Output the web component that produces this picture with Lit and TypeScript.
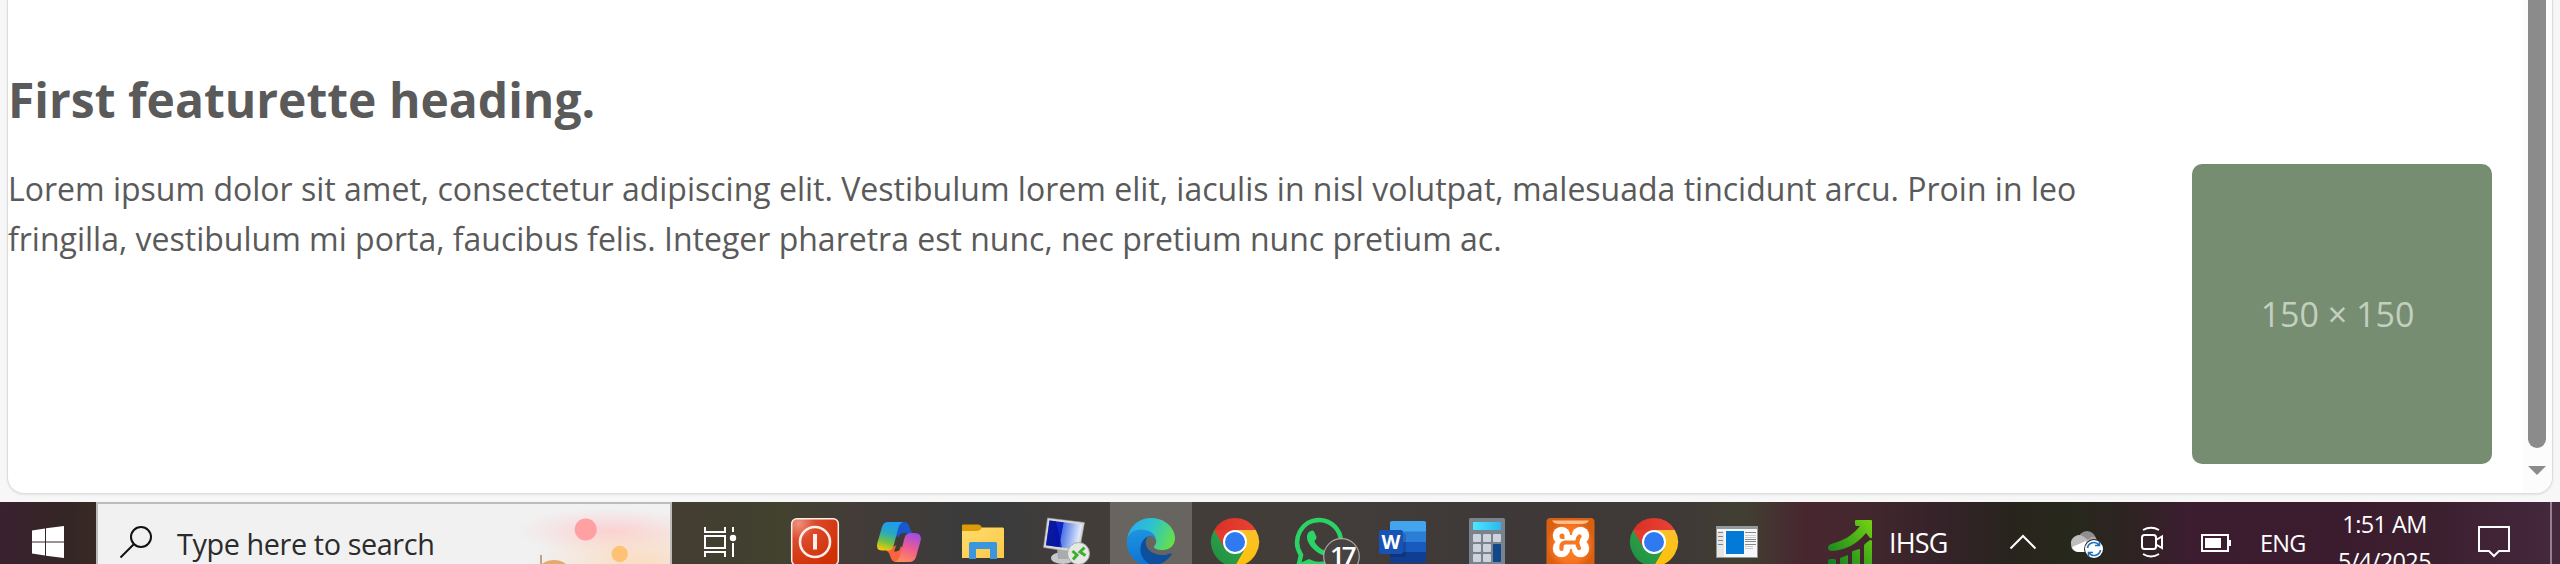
import { LitElement, html, css, svg, TemplateResult } from "lit";
import { customElement, property } from "lit/decorators.js";

const chrome = (p: string) => svg`
  <g transform="translate(42 40)">
    <path d="M0 0 L-20.8 -12 A24 24 0 0 1 20.8 -12 Z M-20.8 -12 A24 24 0 0 1 20.8 -12 L0 -12 Z" fill="url(#${p}r)"/>
    <path d="M-20.8 -12 A24 24 0 0 0 0 24 L10.4 6 L0 0 Z" fill="url(#${p}g)"/>
    <path d="M20.8 -12 A24 24 0 0 1 0 24 L10.4 6 L0 -12 Z" fill="url(#${p}y)"/>
    <path d="M-20.8 -12 L-10.4 6 L0 -12Z" fill="#e33b2e"/>
    <circle r="12" fill="#fff"/><circle r="10" fill="#2f7af0"/>
  </g>
  <defs>
    <linearGradient id="${p}r" x1="0" x2="1"><stop offset="0" stop-color="#d93025"/><stop offset="1" stop-color="#ea4335"/></linearGradient>
    <linearGradient id="${p}g" x1="0" y1="1" x2="1" y2="0"><stop offset="0" stop-color="#1e8e3e"/><stop offset="1" stop-color="#34a853"/></linearGradient>
    <linearGradient id="${p}y" x1="0" y1="1" x2="0" y2="0"><stop offset="0" stop-color="#fcc208"/><stop offset="1" stop-color="#fbc02d"/></linearGradient>
  </defs>`;

const glyphs: Record<string, TemplateResult> = {
  power: svg`
    <defs><radialGradient id="pw" cx=".15" cy=".1" r="1"><stop offset="0" stop-color="#f0917c"/><stop offset=".35" stop-color="#dc4a2c"/><stop offset="1" stop-color="#cf3005"/></radialGradient></defs>
    <rect x="18.7" y="16.7" width="46.6" height="46.6" rx="5" fill="url(#pw)" stroke="#fbeeea" stroke-width="1.5"/>
    <circle cx="42" cy="40" r="15" fill="none" stroke="#fdeee9" stroke-width="2.6"/>
    <rect x="40" y="32" width="4" height="15.5" fill="#fdeee9"/>`,
  copilot: svg`
    <defs>
      <linearGradient id="ca" x1=".6" y1="0" x2=".35" y2="1"><stop offset="0" stop-color="#1b9cf0"/><stop offset=".4" stop-color="#2aa8c0"/><stop offset=".7" stop-color="#6cc04a"/><stop offset="1" stop-color="#f2c808"/></linearGradient>
      <linearGradient id="cb" x1=".6" y1="0" x2=".3" y2="1"><stop offset="0" stop-color="#a34de0"/><stop offset=".5" stop-color="#ee5c92"/><stop offset="1" stop-color="#ff8a5c"/></linearGradient>
    </defs>
    <path d="M33 20 H47 Q51 20 52.5 25 L55 31 H47 Q43 31 41.5 35 L34 33Z" fill="#1857cd"/>
    <path d="M29 48 L42 42 L49 50 L44 60 H39 Q35 60 33.5 55 L32 51Z" fill="#f8643c"/>
    <path d="M31 20 H46 Q42 22 41 27 L36.500 44 Q35 48.500 31 48.500 H25 Q18.500 48.500 20.300 41 L25 25 Q26.500 20 31 20Z" fill="url(#ca)"/>
    <path d="M53 31 H57 Q65.500 31 63.500 39 L59 55 Q57.500 60 52 60 H38 Q42 58 43.200 53 L47.500 36 Q49 31 53 31Z" fill="url(#cb)"/>
    <path d="M42.500 34 Q43.500 31.500 47.500 31.500 L42.800 47.500 Q41.500 49.500 37 49.500Z" fill="#403a37"/>`,
  folder: svg`
    <defs><linearGradient id="fo" x1="0" y1="0" x2="1" y2="1"><stop offset="0" stop-color="#ffdc6b"/><stop offset="1" stop-color="#fcc847"/></linearGradient></defs>
    <path d="M21 23.500 Q21 22.500 22 22.500 H37 Q39 22.500 40 24 L41 25.500 H62 V34 H21Z" fill="#dd9b08"/>
    <path d="M21 29 H35 Q38 29 39.500 27.500 L41 25.700 H62 Q63 25.700 63 27 V56 H21Z" fill="url(#fo)"/>
    <path d="M28 57 V41.500 Q28 40 29.500 40 H54.500 Q56 40 56 41.500 V57 H49 V47 H35 V57Z" fill="#3b96dd"/>`,
  remote: svg`
    <defs><linearGradient id="rm" x1="0" y1="0" x2="1" y2=".15"><stop offset="0" stop-color="#2038b8"/><stop offset=".48" stop-color="#0b22c8"/><stop offset=".5" stop-color="#5074e6"/><stop offset="1" stop-color="#e4efff"/></linearGradient></defs>
    <ellipse cx="38" cy="56" rx="12" ry="6" fill="#c6c8c9"/><path d="M32 47 H46 L44 57 H33Z" fill="#a9acad"/>
    <path d="M22.500 16 L59.500 20.500 L54 51 L18.500 45.500Z" fill="#d8d8d4" stroke="#9b9b98" stroke-width=".6"/>
    <path d="M24.500 18.500 L57 22.500 L52 47.500 L21 43.300Z" fill="url(#rm)"/>
    <path d="M24.500 18.500 L31 19.300 L37 45.500 L21 43.300Z" fill="#000c90" opacity=".65"/>
    <circle cx="53.500" cy="51.500" r="11" fill="#e5e8e5" stroke="#a5a9a5" stroke-width="1"/>
    <path d="M47.500 49 L52 53 L48 57.500 M59.500 45.500 L55 50 L60.500 53.500" fill="none" stroke="#3fae2c" stroke-width="3"/>`,
  edge: svg`
    <defs>
      <linearGradient id="ea" x1="0" y1=".3" x2="1" y2=".6"><stop offset="0" stop-color="#2aa9ee"/><stop offset=".45" stop-color="#2cc3cf"/><stop offset="1" stop-color="#66e04a"/></linearGradient>
      <linearGradient id="eb" x1=".3" y1="0" x2=".4" y2="1"><stop offset="0" stop-color="#1e93e0"/><stop offset="1" stop-color="#0b74d6"/></linearGradient>
    </defs>
    <path d="M18.200 37 C20 24 30 16 42 16 C56 16 66 26 66 36 C66 44 60 48 54 48 C48 48 45 46.500 45 45 C45 43.500 48 42 47 38 C44 31 30 26 18.200 37Z" fill="url(#ea)"/>
    <path d="M18 41 C18 31 25 27.500 32 27.500 C40 27.500 47 32 47.500 38.500 C47 35.500 44 34 41 34 C34 35 30 46 34 54 C36 59 41 63 45 63.700 C29 65 18 54 18 41Z" fill="url(#eb)"/>
    <path d="M40 34.300 C33 36 29 46 33 54 C36 61 43 64 48 63 C55 61 60 57 62.500 52.500 C63 51.500 62 51 61 51.500 C50 56 37 50 36.700 41 C36.600 38 38 35.500 40 34.300Z" fill="#0d4f9c"/>`,
  chrome: chrome("c1"),
  chrome2: chrome("c2"),
  whatsapp: svg`
    <path d="M21.500 64 L24 53 C14 37 25 18 42 18 A22 22 0 0 1 42 62 C38 62 35 61 32 59.500 L21.500 64Z" fill="none" stroke="#2bd366" stroke-width="4.500"/>
    <path d="M34 29 C36 28 37 29 38 31.500 L39.500 35 C40 36.500 37.500 38.500 37.500 39.500 C40 44 44 47.500 48 48.500 C49.500 48 50.500 45 52 45.500 L56 47.500 C59 49 56 53.500 52 54 C43 55 29 43 30 34 C30.500 31 32 29.500 34 29Z" fill="#2bd366"/>
    <circle cx="64.500" cy="54.500" r="17.800" fill="#474341" stroke="#aaa8a6" stroke-width="1.200"/>`,
  word: svg`
    <path d="M31 19 H63 Q65 19 65 20.500 V30 H29 V20.500 Q29 19 31 19Z" fill="#43a5ee"/>
    <rect x="29" y="29.500" width="36" height="11" fill="#2b7dd6"/><rect x="29" y="40" width="36" height="10.500" fill="#185abd"/>
    <path d="M29 50 H65 V59.500 Q65 61 63 61 H31 Q29 61 29 59.500Z" fill="#103f91"/>
    <path d="M29 31 h13 q3 0 3 3 v18 q0 3 -3 3 h-13Z" fill="#000" opacity=".15"/>
    <rect x="18" y="28" width="24" height="24" rx="2" fill="#1852b4"/>`,
  calc: svg`
    <defs><linearGradient id="cl"><stop offset="0" stop-color="#4de6ff"/><stop offset="1" stop-color="#2bb8ee"/></linearGradient></defs>
    <rect x="24" y="16" width="36" height="50" rx="1.500" fill="#79838d"/>
    <rect x="28" y="20" width="28" height="8" rx="1" fill="url(#cl)"/>
    ${[0, 1, 2].map((r) => [0, 1, 2].map((c) => r && c === 2 ? null : svg`<rect x=${28 + c * 10} y=${32 + r * 10} width="8" height="8" rx="1" fill="#ccd3dc"/>`))}
    <rect x="48" y="42" width="8" height="18" rx="1" fill="#12478c"/>`,
  xampp: svg`
    <defs><radialGradient id="xa"><stop offset="0" stop-color="#ff8427"/><stop offset=".7" stop-color="#f77420"/><stop offset="1" stop-color="#d95f11"/></radialGradient></defs>
    <rect x="17.500" y="16" width="48" height="52" rx="4" fill="url(#xa)"/>
    <path d="M23 18.500 H60 Q58 22 53 22 H30 Q25 22 23 18.500Z" fill="#ffbd8b"/>
    <g fill="#fff"><circle cx="32.500" cy="33.500" r="8.700"/><circle cx="51.500" cy="33.500" r="8.700"/><circle cx="32.500" cy="46.500" r="8.700"/><circle cx="51.500" cy="46.500" r="8.700"/><rect x="28" y="33" width="28" height="14"/></g>
    <path d="M30.500 34 Q30.500 31.500 33 31.500 Q35.500 31.500 35.500 34 V37 H33 Q30.500 37 30.500 34Z" fill="#f77822"/>
    <path d="M32.500 47 V44.500 Q32.500 41 36 40.500 H47.500 M48.500 40 Q48.500 36 50.500 34.500 M48.500 41 Q48.500 44 50 46" fill="none" stroke="#f77822" stroke-width="4.200" stroke-linecap="round"/>`,
  windowapp: svg`
    <rect x="21.500" y="24.500" width="41" height="31" fill="#f7f7f7" stroke="#8f9699"/>
    <rect x="21" y="24" width="42" height="3" fill="#939a9e"/><rect x="22" y="29" width="7" height="26" fill="#e6e6e6"/>
    <rect x="31" y="29" width="18" height="23" fill="#0379d8"/>
    <path d="M23 30.500h5M23 34.500h5M23 38.500h5M23 42.500h5M50 30.500h11M50 37.500h11M50 39.500h11M50 42.500h11" stroke="#888" stroke-width="1"/>
    <path d="M50 33.500h11M50 35.500h11M50 44.500h8M50 46.500h8" stroke="#ccc" stroke-width="1"/>`,
};

@customElement("task-icon")
class TaskIcon extends LitElement {
  @property() name = "";
  static styles = css`
    :host { display: block; position: relative; height: 62px; }
    svg { display: block; width: 84px; height: 62px; overflow: visible; }
    .badge, .letter { position: absolute; color: #fff; line-height: 1; }
    .badge { left: 53px; top: 40px; font: 600 26px/26px "Open Sans", sans-serif; letter-spacing: -3px; }
    .letter { left: 20.500px; top: 30px; font: bold 19.500px/19.500px "Open Sans", sans-serif; }
  `;
  render() {
    return html`<svg viewBox="0 0 84 62">${glyphs[this.name]}</svg>
      ${this.name === "whatsapp" ? html`<span class="badge">17</span>` : null}
      ${this.name === "word" ? html`<span class="letter">W</span>` : null}`;
  }
}

@customElement("task-bar")
class TaskBar extends LitElement {
  static styles = css`
    :host {
      display: flex; height: 62px; overflow: hidden; color: #fff;
      font-family: "Open Sans", "Noto Sans", sans-serif;
      background: linear-gradient(90deg, #3a2230 0, #342624 70px, #382925 96px, #443d32 672px, #413f30 735px, #43422f 780px, #433c38 850px, #3a3b3c 985px, #433d3a 1090px, #433d3a 1300px, #3e3938 1500px, #3f3937 1680px, #413f31 1745px, #482630 1805px, #45272f 1850px, #332328 1950px, #28241d 2010px, #27281c 2070px, #2e2322 2130px, #3c1d30 2190px, #3b1c2e 2350px, #3d2030 2440px, #46283e 2560px);
    }
    svg { display: block; flex: none; }
    .start { width: 96px; }
    .search { box-sizing: border-box; width: 576px; height: 64px; border: 2px solid #bcbcbc; background: #f1f1f1; display: flex; flex: none; color: #2b2b2b; }
    .query { width: 257px; flex: none; margin-top: 17px; font-size: 28.800px; line-height: 46px; white-space: nowrap; letter-spacing: -.4px; }
    .view { width: 101px; }
    .apps { display: flex; flex: none; width: 1007px; }
    task-icon { width: 84px; flex: none; }
    .short { width: 83px; }
    .active { background: linear-gradient(90deg, transparent 1px, #68645f 1px, #68645f 83px, transparent 83px); }
    .stock { width: 109px; }
    .label { white-space: nowrap; flex: none; }
    .ihsg { width: 111px; font-size: 27px; line-height: 82px; letter-spacing: -.8px; }
    .lang { width: 59px; font-size: 23.500px; line-height: 83px; letter-spacing: -.8px; }
    .clock { width: 131px; text-align: center; font-size: 23.500px; line-height: 37px; padding-top: 4px; letter-spacing: -.6px; }
  `;
  render() {
    return html`
      <svg class="start" width="96" height="62"><path d="M32 28.500 L45 26.500 V39.500 H32Z M46 26.300 L64 24 V39.500 H46Z M32 40.500 H45 V53.500 L32 51.500Z M46 40.500 H64 V56 L46 53.700Z" fill="#fff"/></svg>
      <div class="search">
        <svg width="79" height="60"><g transform="translate(-98 -504)" fill="none" stroke="#111" stroke-width="2"><circle cx="141" cy="537" r="10"/><path d="M133.500 544.500 L120.500 557.500"/></g></svg>
        <span class="query">Type here to search</span>
        <svg width="236" height="60" viewBox="434 504 236 60">
          <defs>
            <radialGradient id="g1"><stop offset="0" stop-color="#ffc4c8" stop-opacity=".7"/><stop offset="1" stop-color="#ffc4c8" stop-opacity="0"/></radialGradient>
            <radialGradient id="g2"><stop offset="0" stop-color="#ffd3ae" stop-opacity=".7"/><stop offset="1" stop-color="#ffd3ae" stop-opacity="0"/></radialGradient>
          </defs>
          <ellipse cx="610" cy="531" rx="94" ry="23" fill="url(#g1)"/>
          <ellipse cx="640" cy="562" rx="110" ry="38" fill="url(#g2)"/>
          <circle cx="585.700" cy="529.500" r="11" fill="#ffa0a2"/><circle cx="619.700" cy="554" r="8.200" fill="#ffc274"/>
          <path d="M541 555 V564" stroke="#b98568" stroke-width="1.500"/><ellipse cx="554" cy="570" rx="15" ry="10" fill="#e2aa6c"/>
        </svg>
      </div>
      <svg class="view" width="101" height="62" viewBox="672 502 101 62"><g fill="none" stroke="#fff" stroke-width="2"><path d="M705 527 V532 H725 V527 M705 557 V552 H725 V557"/><rect x="705" y="536" width="20" height="12"/><path d="M733 527 V532 M733 543 V557"/></g><circle cx="733" cy="538" r="3.200" fill="#fff"/></svg>
      <div class="apps">
        ${["power", "copilot", "folder", "remote"].map((n) => html`<task-icon name=${n}></task-icon>`)}
        <task-icon class="active" name="edge"></task-icon>
        ${["chrome", "whatsapp", "word", "calc"].map((n) => html`<task-icon name=${n}></task-icon>`)}
        ${["xampp", "chrome2", "windowapp"].map((n) => html`<task-icon class="short" name=${n}></task-icon>`)}
      </div>
      <svg class="stock" width="109" height="62" viewBox="1780 502 109 62">
        <defs><linearGradient id="sg" gradientUnits="userSpaceOnUse" x1="1828" y1="560" x2="1872" y2="525"><stop offset="0" stop-color="#108020"/><stop offset="1" stop-color="#70cf12"/></linearGradient></defs>
        <g fill="url(#sg)"><path d="M1855 521 Q1855 520 1856 520 H1871 Q1872 520 1872 521 V537 Q1872 539 1870 538 L1866 533 C1856 545 1845 550 1832 551 Q1828 551 1828 548 Q1828 545 1831 544 C1843 541 1852 536 1860 526 L1856 526 Q1855 525 1855 524Z"/>
        <rect x="1828" y="559" width="8" height="12" rx="2"/><path d="M1840 558 L1848 555 V568 H1840Z M1852 552 Q1852 551 1853 551 L1859 549 Q1860 549 1860 550 V568 H1852Z M1864 546 Q1864 544 1866 543 L1870 540 Q1872 540 1872 541 V568 H1864Z"/></g>
      </svg>
      <span class="label ihsg">IHSG</span>
      <svg width="260" height="62" viewBox="2000 502 260 62" fill="none" stroke="#fff" stroke-width="2">
        <path d="M2010.500 548.500 L2023 536 L2035.500 548.500"/>
        <g stroke="none"><circle cx="2087" cy="540" r="9" fill="#8f8f8f"/><path d="M2087 540 Q2097 531 2098 546 H2087Z" fill="#aaa"/><path d="M2071 544 A8 8 0 0 1 2084 537 Q2087 539 2095 546 L2088 552 H2079 Q2071 552 2071 544Z" fill="#bdbdbd"/><path d="M2072 547 L2086 541 L2090 552 H2079 Q2074 552 2072 547Z" fill="#fff"/>
        <circle cx="2094" cy="549" r="10" fill="#2a261f"/><circle cx="2094" cy="549" r="9" fill="#fff"/></g>
        <path d="M2087.500 548 A6.500 6.500 0 0 1 2099 545 M2100.500 550 A6.500 6.500 0 0 1 2089 553 M2099.500 541.500 V545.500 H2095 M2088.500 556.500 V552.500 H2093" stroke="#1b70c4" stroke-width="1.600"/>
        <rect x="2142" y="535" width="14" height="14" rx="2.500"/><path d="M2156 540 L2162 536.500 V548 L2156 544.500 M2143 530 Q2151 525.500 2159 530 M2143 554 Q2151 559 2159 554"/>
        <path d="M2202 535 H2228 V551 H2202Z"/><path d="M2205 538 H2221 V548 H2205Z M2229 540 H2231 V546 H2229Z" fill="#fff" stroke="none"/>
      </svg>
      <span class="label lang">ENG</span>
      <div class="label clock">1:51 AM<br>5/4/2025</div>
      <svg width="110" height="62" viewBox="2450 502 110 62"><path d="M2479 527 H2509 V551 H2499 L2494 556 L2489 551 H2479Z" fill="none" stroke="#fff" stroke-width="2"/><rect x="2550" y="502" width="2" height="62" fill="#94808f"/></svg>
    `;
  }
}

@customElement("app-root")
class AppRoot extends LitElement {
  static styles = css`
    :host { display: flex; flex-direction: column; height: 564px; overflow: hidden; background: #f7f7f7; font-family: "Open Sans", "Noto Sans", sans-serif; color: #5a5a5a; }
    .frame { height: 502px; flex: none; overflow: hidden; padding: 0 8px; }
    .panel { display: flex; height: 493px; background: #fff; border-radius: 0 0 16px 16px; overflow: hidden; box-shadow: 0 0 0 1px #dedede, 0 1px 3px #ccc; }
    .content { flex: 1; display: flex; }
    .copy { width: 2184px; flex: none; }
    h2 { margin: 67px 0 0; font-size: 48px; line-height: 66px; font-weight: 700; white-space: nowrap; }
    p { margin: 31px 0 0; font-size: 32px; line-height: 50px; white-space: nowrap; }
    .thumb { width: 300px; height: 300px; margin-top: 164px; border-radius: 10px; background: #768d71; color: #c3cfc0; text-align: center; font: 400 34px/300px "Open Sans", sans-serif; text-indent: -9px; }
    .scroll { width: 30px; flex: none; background: #fcfcfc; display: flex; flex-direction: column; align-items: center; }
    .thumb-bar { width: 18px; height: 448px; background: #8b8b8b; border-radius: 0 0 9px 9px; }
    .scroll svg { margin-top: 18px; }
    task-bar { flex: none; }
  `;
  render() {
    return html`
      <div class="frame"><div class="panel">
        <div class="content">
          <div class="copy">
            <h2>First featurette heading.</h2>
            <p>Lorem ipsum dolor sit amet, consectetur adipiscing elit. Vestibulum lorem elit, iaculis in nisl volutpat, malesuada tincidunt arcu. Proin in leo<br>fringilla, vestibulum mi porta, faucibus felis. Integer pharetra est nunc, nec pretium nunc pretium ac.</p>
          </div>
          <div class="thumb">150 × 150</div>
        </div>
        <div class="scroll"><div class="thumb-bar"></div><svg width="18" height="9"><path d="M0 0H18L9 9Z" fill="#8b8b8b"/></svg></div>
      </div></div>
      <task-bar></task-bar>`;
  }
}
